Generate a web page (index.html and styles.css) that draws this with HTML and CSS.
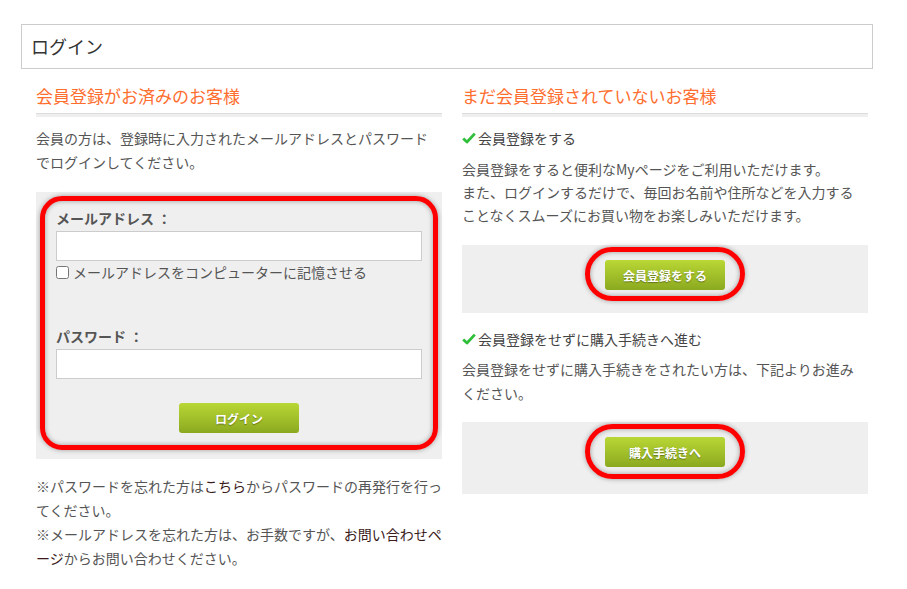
FILE: index.html
```html
<!DOCTYPE html>
<html lang="ja">
<head>
<meta charset="utf-8">
<title>ログイン</title>
<link rel="stylesheet" href="styles.css">
</head>
<body>
<div class="page">
  <div class="title-box">ログイン</div>
  <div class="columns">
    <section class="col">
      <h2 class="heading">会員登録がお済みのお客様</h2>
      <div class="rule"></div>
      <p class="lead lead-first">会員の方は、登録時に入力されたメールアドレスとパスワードでログインしてください。</p>
      <div class="login-box">
        <div class="label">メールアドレス ：</div>
        <input class="field" type="text">
        <label class="remember"><input type="checkbox" class="check">メールアドレスをコンピューターに記憶させる</label>
        <div class="label label-pw">パスワード ：</div>
        <input class="field" type="password">
        <div class="btn-row btn-row-login"><span class="btn">ログイン</span></div>
        <div class="mark mark-login"></div>
      </div>
      <p class="notes">※パスワードを忘れた方は<a class="link">こちら</a>からパスワードの再発行を行ってください。<br>※メールアドレスを忘れた方は、お手数ですが、<a class="link">お問い合わせページ</a>からお問い合わせください。</p>
    </section>
    <section class="col">
      <h2 class="heading">まだ会員登録されていないお客様</h2>
      <div class="rule"></div>
      <div class="check-title check-title-first">
        <svg class="tick" width="14" height="12" viewBox="0 0 14 12"><path d="M1.2 6.4 L5 10 L12.8 1.6" fill="none" stroke="#2fbf3a" stroke-width="2.8" stroke-linejoin="round"/></svg>会員登録をする
      </div>
      <p class="lead lead-reg">会員登録をすると便利なMyページをご利用いただけます。<br>また、ログインするだけで、毎回お名前や住所などを入力することなくスムーズにお買い物をお楽しみいただけます。</p>
      <div class="action-box action-box-reg">
        <span class="btn">会員登録をする</span>
        <div class="mark mark-btn mark-reg"></div>
      </div>
      <div class="check-title check-title-second">
        <svg class="tick" width="14" height="12" viewBox="0 0 14 12"><path d="M1.2 6.4 L5 10 L12.8 1.6" fill="none" stroke="#2fbf3a" stroke-width="2.8" stroke-linejoin="round"/></svg>会員登録をせずに購入手続きへ進む
      </div>
      <p class="lead lead-guest">会員登録をせずに購入手続きをされたい方は、下記よりお進みください。</p>
      <div class="action-box action-box-guest">
        <span class="btn">購入手続きへ</span>
        <div class="mark mark-btn mark-guest"></div>
      </div>
    </section>
  </div>
</div>
</body>
</html>
```

FILE: styles.css
```css
* { box-sizing: border-box; }
html, body { margin: 0; padding: 0; background: #fff; }
body {
  font-family: "Noto Sans CJK JP", "Noto Sans", sans-serif;
  color: #555;
  font-size: 14px;
}
.page {
  width: 852px;
  margin-left: 21px;
  padding-top: 24px;
}
.title-box {
  height: 45px;
  border: 1px solid #ccc;
  padding-left: 9px;
  font-size: 18px;
  line-height: 42px;
  color: #333;
}
.columns {
  display: flex;
  gap: 20px;
  margin-left: 15px;
  width: 832px;
}
.col { width: 406px; }
.heading {
  margin: 15px 0 0;
  font-size: 17px;
  font-weight: normal;
  line-height: 24px;
  color: #ff6e2e;
  padding-bottom: 5px;
}
.rule {
  height: 4px;
  border-top: 1px solid #dcdcdc;
  background: #efefef;
}
.lead {
  margin: 0;
  padding-right: 12px;
  line-height: 24px;
}
.lead-first { margin-top: 9px; }
.login-box {
  position: relative;
  margin-top: 18px;
  background: #efefef;
  padding: 14px 20px 26px;
}
.label {
  font-weight: bold;
  line-height: 24px;
  color: #555;
}
.label-pw { margin-top: 41px; }
.field {
  display: block;
  width: 100%;
  height: 30px;
  margin: 1px 0 0;
  border: 1px solid #ccc;
  background: #fff;
  padding: 0 6px;
}
.remember {
  display: flex;
  align-items: center;
  height: 22px;
  line-height: 22px;
  color: #555;
}
.check {
  width: 13px;
  height: 13px;
  margin: 0 4px 0 0;
}
.btn-row {
  display: flex;
  justify-content: center;
}
.btn-row-login { margin-top: 24px; }
.btn {
  display: inline-flex;
  align-items: center;
  justify-content: center;
  width: 120px;
  height: 30px;
  border-radius: 3px;
  background: linear-gradient(#b9d735, #8ba91f);
  color: #fff;
  font-weight: bold;
  font-size: 12px;
  text-shadow: 0 1px 1px rgba(0, 0, 0, 0.35);
}
.notes {
  margin: 15px 0 0;
  line-height: 24px;
  line-break: loose;
}
.link { color: #3a1a1a; }
.check-title {
  display: flex;
  align-items: center;
  line-height: 24px;
  color: #444;
}
.check-title-first { margin-top: 9px; }
.check-title-second { margin-top: 14px; }
.tick { margin-right: 2px; }
.lead-reg { margin-top: 8px; line-height: 23px; }
.lead-guest { margin-top: 6px; }
.action-box {
  position: relative;
  background: #efefef;
  display: flex;
  justify-content: center;
}
.action-box-reg { margin-top: 18px; padding: 15px 0 23px; }
.action-box-guest { margin-top: 17px; padding: 15px 0 27px; }
.mark {
  position: absolute;
  border: 5px solid #ff0000;
  box-shadow: 0 0 5px rgba(0, 0, 0, 0.35), inset 0 0 5px rgba(0, 0, 0, 0.35);
}
.mark-login {
  left: 4px;
  top: 4px;
  width: 398px;
  height: 254px;
  border-radius: 22px;
}
.mark-btn {
  left: 123px;
  top: 2px;
  width: 160px;
  border-radius: 28px;
}
.mark-reg { height: 54px; }
.mark-guest { height: 55px; }
```
